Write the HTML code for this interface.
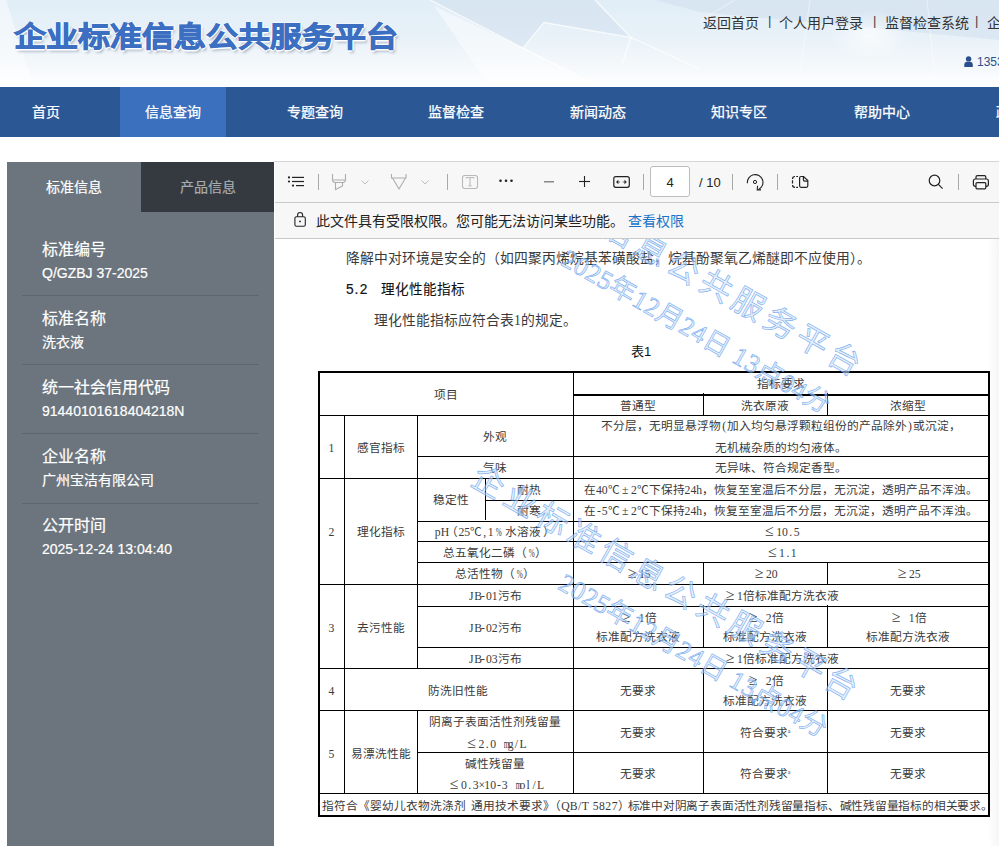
<!DOCTYPE html>
<html lang="zh-CN"><head><meta charset="utf-8"><title>企业标准信息公共服务平台</title>
<style>
html,body{margin:0;padding:0;}
body{width:999px;height:846px;overflow:hidden;position:relative;background:#fff;font-family:'Liberation Sans', sans-serif;}
.a{position:absolute;white-space:nowrap;}
.bx{position:absolute;}
.it{position:absolute;top:87px;height:50px;line-height:50px;color:#fff;font-size:14px;white-space:nowrap;-webkit-text-stroke:0.25px #fff;}
.tab{position:absolute;top:162px;height:50px;line-height:50px;text-align:center;font-size:14px;-webkit-text-stroke:0.2px currentColor;}
.blk{position:absolute;left:42px;color:#fff;white-space:nowrap;-webkit-text-stroke:0.2px #fff;}
.blk .t{font-size:16px;line-height:22px;}
.blk .v{font-size:14px;line-height:20px;margin-top:2px;}
.dvd{position:absolute;left:22px;width:237px;height:1px;background:#5e666d;}
.sep{position:absolute;width:1px;height:16px;background:#a9a9a9;top:174px;}
#doc{position:absolute;left:274px;top:239px;width:725px;height:607px;overflow:hidden;}
.dt{position:absolute;white-space:nowrap;font-family:'Liberation Serif', serif;color:#3a3a3a;}
.ln{position:absolute;background:#000;}
.fw{display:inline-block;width:1em;text-align:center;}
.hw{display:inline-block;width:0.5em;text-align:center;}
.fg{display:inline-block;width:0.87em;text-align:center;font-size:1.35em;line-height:1px;}
.wm{position:absolute;white-space:nowrap;transform-origin:0 0;font-family:'Liberation Serif', serif;}
</style></head><body>

<div class="bx" style="left:0;top:0;width:999px;height:87px;overflow:hidden;background:linear-gradient(180deg,#e1eef7 0%,#e8f1f8 40%,#f4f8fb 75%,#ffffff 100%);">
<svg width="999" height="87" style="position:absolute;left:0;top:0">
 <defs><radialGradient id="gl" cx="0.5" cy="0.5" r="0.5"><stop offset="0" stop-color="#ffffff" stop-opacity="0.7"/><stop offset="1" stop-color="#ffffff" stop-opacity="0"/></radialGradient></defs>
 <g fill="#cddcea" fill-opacity="0.45">
  <polygon points="430,0 595,0 631,37.5 544,22.5 523,48"/>
  <polygon points="655,0 999,0 999,40 700,12"/>
 </g>
 <g fill="#ffffff" fill-opacity="0.45">
  <polygon points="0,0 6,0 34,87 0,87"/>
  <polygon points="434,6 523,48 600,87 490,87"/>
 </g>
 <g fill="none" stroke="#ffffff" stroke-opacity="0.75" stroke-width="1.3">
  <path d="M430 0 L523 48 L544 22.5 L631 37.5 L595 0"/>
  <path d="M631 37.5 L622 64"/>
  <path d="M631 37.5 L700 69"/>
  <path d="M523 48 L600 87"/>
 </g>
 <g fill="none" stroke="#ffffff" stroke-opacity="0.45" stroke-width="1">
  <path d="M699 21 L735 0"/>
  <path d="M810 0 L798 87"/>
  <path d="M927 0 L936 87"/>
 </g>
 <ellipse cx="870" cy="35" rx="40" ry="25" fill="url(#gl)"/>
</svg>
<div class="a" style="left:14px;top:11.5px;font-size:32px;font-weight:900;color:#3c6fc2;-webkit-text-stroke:1px #3c6fc2;transform:scaleY(0.88);transform-origin:0 24px;text-shadow:1.5px 0 0 #fff,-1.5px 0 0 #fff,0 1.5px 0 #fff,0 -1.5px 0 #fff,1px 1px 0 #fff,-1px -1px 0 #fff,1px -1px 0 #fff,-1px 1px 0 #fff,2px 3px 3px rgba(60,80,110,0.4);">企业标准信息公共服务平台</div>
<div class="a" style="left:703px;top:11.5px;font-size:14px;color:#333;">返回首页</div>
<div class="a" style="left:768px;top:12.5px;font-size:13px;color:#444;">|</div>
<div class="a" style="left:779px;top:11.5px;font-size:14px;color:#333;">个人用户登录</div>
<div class="a" style="left:873px;top:12.5px;font-size:13px;color:#444;">|</div>
<div class="a" style="left:885px;top:11.5px;font-size:14px;color:#333;">监督检查系统</div>
<div class="a" style="left:975px;top:12.5px;font-size:13px;color:#444;">|</div>
<div class="a" style="left:987px;top:11.5px;font-size:14px;color:#333;">企业</div>
<svg class="a" style="left:964px;top:56px" width="9" height="11" viewBox="0 0 9 11"><circle cx="4.6" cy="2.9" r="2.7" fill="#2b4f8c"/><path d="M0.3 11 V8.4 Q0.3 6 2.8 5.8 H6.3 Q8.8 6 8.8 8.4 V11 Z" fill="#2b4f8c"/></svg>
<div class="a" style="left:977px;top:54.5px;font-size:12px;color:#2b4f8c;">13533</div>
</div>

<div class="bx" style="left:0;top:87px;width:999px;height:50px;background:#2c5795;"></div>
<div class="bx" style="left:120px;top:87px;width:106px;height:50px;background:#3a70bd;"></div>
<div class="it" style="left:31.6px">首页</div>
<div class="it" style="left:144.6px">信息查询</div>
<div class="it" style="left:286.7px">专题查询</div>
<div class="it" style="left:428.4px">监督检查</div>
<div class="it" style="left:570px">新闻动态</div>
<div class="it" style="left:711px">知识专区</div>
<div class="it" style="left:854px">帮助中心</div>
<div class="it" style="left:995.6px">政策法规</div>
<div class="bx" style="left:7px;top:162px;width:267px;height:684px;background:#6c757d;"></div>
<div class="tab" style="left:7px;width:134px;color:#fff;">标准信息</div>
<div class="tab" style="left:141px;width:133px;background:#343a40;color:#a9acaf;">产品信息</div>
<div class="blk" style="top:239.00px"><div class="t">标准编号</div><div class="v">Q/GZBJ 37-2025</div></div>
<div class="dvd" style="top:295.20px"></div>
<div class="blk" style="top:308.10px"><div class="t">标准名称</div><div class="v">洗衣液</div></div>
<div class="dvd" style="top:364.30px"></div>
<div class="blk" style="top:377.20px"><div class="t">统一社会信用代码</div><div class="v">91440101618404218N</div></div>
<div class="dvd" style="top:433.40px"></div>
<div class="blk" style="top:446.30px"><div class="t">企业名称</div><div class="v">广州宝洁有限公司</div></div>
<div class="dvd" style="top:502.50px"></div>
<div class="blk" style="top:515.40px"><div class="t">公开时间</div><div class="v">2025-12-24 13:04:40</div></div>
<div class="bx" style="left:274px;top:161px;width:725px;height:685px;background:#fff;"></div>
<div class="bx" style="left:274px;top:161px;width:725px;height:1px;background:#d6d6d6;"></div>
<div class="bx" style="left:275px;top:162px;width:724px;height:40px;background:#f7f7f7;"></div>
<div class="bx" style="left:275px;top:202px;width:724px;height:1px;background:#c9c9c9;"></div>
<div class="bx" style="left:275px;top:203px;width:724px;height:35px;background:#f7f7f7;"></div>
<div class="bx" style="left:275px;top:238px;width:724px;height:1px;background:#c9c9c9;"></div>
<div class="sep" style="left:318px"></div>
<div class="sep" style="left:447px"></div>
<div class="sep" style="left:643px"></div>
<div class="sep" style="left:732px"></div>
<div class="sep" style="left:777px"></div>
<div class="sep" style="left:958px"></div>
<div class="a" style="left:650px;top:166px;width:40px;height:31px;background:#fff;border:1px solid #bcbcbc;border-radius:3px;box-sizing:border-box;text-align:center;line-height:31px;font-size:13px;color:#222;">4</div>
<div class="a" style="left:699px;top:168px;line-height:30px;font-size:13px;color:#222;">/ 10</div>
<div class="a" style="left:316px;top:211px;font-size:14px;line-height:20px;color:#222;">此文件具有受限权限。您可能无法访问某些功能。</div>
<div class="a" style="left:628px;top:211px;font-size:14px;line-height:20px;color:#1a73c8;">查看权限</div>
<svg class="bx" style="left:0;top:0" width="999" height="240" viewBox="0 0 999 240"><g fill="#222"><circle cx="289" cy="177.4" r="1.1"/><circle cx="289" cy="181.5" r="1.1"/><circle cx="293" cy="185.6" r="1.1"/></g><g stroke="#222" stroke-width="1.2"><line x1="292" y1="177.4" x2="304" y2="177.4"/><line x1="292" y1="181.5" x2="304" y2="181.5"/><line x1="296" y1="185.6" x2="304" y2="185.6"/></g><g fill="none" stroke="#adadad" stroke-width="1.1"><path d="M332.5 174 V180 H345.5 V174"/><path d="M332.5 180 Q332.8 182.5 335 182.5 H343 Q345.2 182.5 345.5 180"/><path d="M335.5 182.5 V189.5 L342.5 186 V182.5"/></g><path d="M361.5 180.5 L365 184 L368.5 180.5" fill="none" stroke="#bdbdbd" stroke-width="1"/><g fill="none" stroke="#adadad" stroke-width="1.1"><path d="M391.5 174 V178 H406 V174"/><path d="M392.5 178 L399 189 L405.5 178"/></g><path d="M421.5 180.5 L425 184 L428.5 180.5" fill="none" stroke="#bdbdbd" stroke-width="1"/><rect x="462.5" y="175.5" width="15" height="13" rx="2.2" fill="none" stroke="#b9b9b9" stroke-width="1.1"/><g stroke="#b9b9b9" stroke-width="1" fill="none"><path d="M466 178.5 V177.6 H474 V178.5"/><path d="M470 177.6 V185.8 M468.3 185.8 H471.7"/></g><g fill="#222"><circle cx="500.5" cy="180.8" r="1.3"/><circle cx="506" cy="180.8" r="1.3"/><circle cx="511.5" cy="180.8" r="1.3"/></g><line x1="544" y1="181.8" x2="554" y2="181.8" stroke="#777" stroke-width="1.3"/><g stroke="#222" stroke-width="1.1"><line x1="579" y1="181.5" x2="590" y2="181.5"/><line x1="584.5" y1="176" x2="584.5" y2="187"/></g><rect x="613.8" y="176.7" width="15.5" height="10.6" rx="2" fill="none" stroke="#222" stroke-width="1.2"/><path d="M616 182 L618.4 179.8 V184.2 Z M626.8 182 L624.4 179.8 V184.2 Z" fill="#222"/><g stroke="#777" stroke-width="1"><line x1="618" y1="182" x2="620.2" y2="182"/><line x1="622.6" y1="182" x2="624.8" y2="182"/></g><g fill="none" stroke="#222" stroke-width="1.1"><path d="M747.4 183.2 A7.8 7.8 0 1 1 758.6 189.4"/><path d="M757.6 185.8 L757.2 189.9 L761 189.9"/></g><circle cx="755" cy="182" r="1.6" fill="none" stroke="#222" stroke-width="1"/><g fill="none" stroke="#222" stroke-width="1.2"><path d="M792.5 179 Q792.5 176.5 795 176.5 M796.2 176.5 H798 M792.5 180.3 V183.6 M792.5 185 Q792.5 187.3 795 187.3 M796.2 187.3 H798"/><path d="M803.6 176.5 H801 Q799.6 176.5 799.6 178 V185.8 Q799.6 187.3 801 187.3 H806.3 Q807.8 187.3 807.8 185.8 V180.6 Z"/><path d="M803.4 176.5 V179.8 Q803.4 181.2 804.8 181.2 H807.8"/></g><g fill="none" stroke="#222" stroke-width="1.2"><circle cx="934.5" cy="180.5" r="5.3"/><line x1="938.4" y1="184.4" x2="942.6" y2="188.6"/></g><g fill="none" stroke="#222" stroke-width="1.2"><path d="M976 179 V177 Q976 175.6 977.4 175.6 H984.4 Q985.8 175.6 985.8 177 V179"/><path d="M976 186.4 H975.5 Q973.4 186.4 973.4 184.3 V181 Q973.4 179 975.4 179 H986.4 Q988.4 179 988.4 181 V184.3 Q988.4 186.4 986.3 186.4 H985.8"/><rect x="976" y="182.6" width="9.8" height="6.2" rx="1"/></g><g fill="none" stroke="#222" stroke-width="1.1"><rect x="294.9" y="216.7" width="10.4" height="9.6" rx="1.6"/><path d="M297.6 216.7 V215 A2.5 2.5 0 0 1 302.6 215 V216.7"/></g><circle cx="300" cy="221.4" r="0.9" fill="#222"/></svg>
<div class="bx" style="left:990px;top:239px;width:9px;height:607px;background:linear-gradient(90deg,#fdfdfd,#f6f6f6);"></div>
<div id="doc">
<div class="dt" style="left:72.0px;top:11.0px;font-size:13.8px;line-height:17.9px;">降解中对环境是安全的（如四聚丙烯烷基苯磺酸盐，烷基酚聚氧乙烯醚即不应使用）。</div>
<div class="dt" style="left:72.0px;top:42.0px;font-size:13.76px;line-height:17.9px;font-family:'Liberation Sans',sans-serif;color:#111;-webkit-text-stroke:0.2px #111"><span class='hw'>5</span><span class='hw'>.</span><span class='hw'>2</span></div>
<div class="dt" style="left:107.0px;top:42.0px;font-size:13.6px;line-height:17.7px;font-family:'Liberation Sans',sans-serif;color:#111;-webkit-text-stroke:0.1px #111">理化性能指标</div>
<div class="dt" style="left:100.0px;top:73.0px;font-size:13.8px;line-height:17.9px;">理化性能指标应符合表1的规定。</div>
<div class="dt" style="left:357.0px;top:104.5px;font-size:13px;line-height:16.9px;font-family:'Liberation Sans',sans-serif;color:#111">表1</div>
<div class="ln" style="left:44.0px;top:132.0px;width:672.0px;height:2px"></div>
<div class="ln" style="left:44.0px;top:576.0px;width:672.0px;height:2px"></div>
<div class="ln" style="left:44.0px;top:132.0px;width:2px;height:446.0px"></div>
<div class="ln" style="left:714.0px;top:132.0px;width:2px;height:446.0px"></div>
<div class="ln" style="left:299.0px;top:154.5px;width:416.0px;height:2px"></div>
<div class="ln" style="left:45.0px;top:176.0px;width:670.0px;height:1px"></div>
<div class="ln" style="left:70.0px;top:176.0px;width:1px;height:378.0px"></div>
<div class="ln" style="left:143.0px;top:176.0px;width:1px;height:253.0px"></div>
<div class="ln" style="left:143.0px;top:471.0px;width:1px;height:83.0px"></div>
<div class="ln" style="left:299.0px;top:133.0px;width:1px;height:421.0px"></div>
<div class="ln" style="left:143.0px;top:217.0px;width:572.0px;height:1px"></div>
<div class="ln" style="left:45.0px;top:239.0px;width:670.0px;height:1px"></div>
<div class="ln" style="left:210.5px;top:239.0px;width:1px;height:42.0px"></div>
<div class="ln" style="left:210.5px;top:260.5px;width:504.5px;height:1px"></div>
<div class="ln" style="left:143.0px;top:281.5px;width:572.0px;height:1px"></div>
<div class="ln" style="left:143.0px;top:302.0px;width:572.0px;height:1px"></div>
<div class="ln" style="left:143.0px;top:323.0px;width:572.0px;height:1px"></div>
<div class="ln" style="left:45.0px;top:345.0px;width:670.0px;height:1px"></div>
<div class="ln" style="left:428.5px;top:154.0px;width:1px;height:22.0px"></div>
<div class="ln" style="left:553.0px;top:154.0px;width:1px;height:22.0px"></div>
<div class="ln" style="left:428.5px;top:323.0px;width:1px;height:22.0px"></div>
<div class="ln" style="left:553.0px;top:323.0px;width:1px;height:22.0px"></div>
<div class="ln" style="left:143.0px;top:366.5px;width:572.0px;height:1px"></div>
<div class="ln" style="left:143.0px;top:408.0px;width:572.0px;height:1px"></div>
<div class="ln" style="left:45.0px;top:429.0px;width:670.0px;height:1px"></div>
<div class="ln" style="left:45.0px;top:471.0px;width:670.0px;height:1px"></div>
<div class="ln" style="left:143.0px;top:513.0px;width:572.0px;height:1px"></div>
<div class="ln" style="left:45.0px;top:554.0px;width:670.0px;height:1px"></div>
<div class="ln" style="left:428.5px;top:366.0px;width:1px;height:42.0px"></div>
<div class="ln" style="left:553.0px;top:366.0px;width:1px;height:42.0px"></div>
<div class="ln" style="left:428.5px;top:429.0px;width:1px;height:125.0px"></div>
<div class="ln" style="left:553.0px;top:429.0px;width:1px;height:125.0px"></div>
<div class="dt" style="left:-78.0px;width:500px;text-align:center;top:146.5px;line-height:20px;font-size:11.7px;">项目</div>
<div class="dt" style="left:257.0px;width:500px;text-align:center;top:135.5px;line-height:20px;font-size:11.7px;">指标要求</div>
<div class="dt" style="left:114.0px;width:500px;text-align:center;top:157.5px;line-height:20px;font-size:11.7px;">普通型</div>
<div class="dt" style="left:241.0px;width:500px;text-align:center;top:157.5px;line-height:20px;font-size:11.7px;">洗衣原液</div>
<div class="dt" style="left:384.0px;width:500px;text-align:center;top:157.5px;line-height:20px;font-size:11.7px;">浓缩型</div>
<div class="dt" style="left:-192.5px;width:500px;text-align:center;top:199.5px;line-height:20px;font-size:11.7px;"><span class='hw'>1</span></div>
<div class="dt" style="left:-143.0px;width:500px;text-align:center;top:199.5px;line-height:20px;font-size:11.7px;">感官指标</div>
<div class="dt" style="left:-29.0px;width:500px;text-align:center;top:188.5px;line-height:20px;font-size:11.7px;">外观</div>
<div class="dt" style="left:-29.0px;width:500px;text-align:center;top:219.5px;line-height:20px;font-size:11.7px;">气味</div>
<div class="dt" style="left:257.0px;width:500px;text-align:center;top:177.5px;line-height:20px;font-size:11.7px;">不分层，无明显悬浮物<span class='hw'>(</span>加入均匀悬浮颗粒组份的产品除外<span class='hw'>)</span>或沉淀，</div>
<div class="dt" style="left:257.0px;width:500px;text-align:center;top:199.5px;line-height:20px;font-size:11.7px;">无机械杂质的均匀液体。</div>
<div class="dt" style="left:257.0px;width:500px;text-align:center;top:219.5px;line-height:20px;font-size:11.7px;">无异味、符合规定香型。</div>
<div class="dt" style="left:-192.5px;width:500px;text-align:center;top:283.5px;line-height:20px;font-size:11.7px;"><span class='hw'>2</span></div>
<div class="dt" style="left:-143.0px;width:500px;text-align:center;top:283.5px;line-height:20px;font-size:11.7px;">理化指标</div>
<div class="dt" style="left:-73.0px;width:500px;text-align:center;top:252.0px;line-height:20px;font-size:11.7px;">稳定性</div>
<div class="dt" style="left:5.0px;width:500px;text-align:center;top:241.5px;line-height:20px;font-size:11.7px;">耐热</div>
<div class="dt" style="left:5.0px;width:500px;text-align:center;top:262.5px;line-height:20px;font-size:11.7px;">耐寒</div>
<div class="dt" style="left:257.0px;width:500px;text-align:center;top:241.5px;line-height:20px;font-size:11.7px;">在<span class='hw'>4</span><span class='hw'>0</span><span class='fw'>℃</span><span class='fw'>±</span><span class='hw'>2</span><span class='fw'>℃</span>下保持<span class='hw'>2</span><span class='hw'>4</span><span class='hw'>h</span>，恢复至室温后不分层，无沉淀，透明产品不浑浊。</div>
<div class="dt" style="left:257.0px;width:500px;text-align:center;top:262.5px;line-height:20px;font-size:11.7px;">在<span class='hw'>-</span><span class='hw'>5</span><span class='fw'>℃</span><span class='fw'>±</span><span class='hw'>2</span><span class='fw'>℃</span>下保持<span class='hw'>2</span><span class='hw'>4</span><span class='hw'>h</span>，恢复至室温后不分层，无沉淀，透明产品不浑浊。</div>
<div class="dt" style="left:-29.0px;width:500px;text-align:center;top:283.5px;line-height:20px;font-size:11.7px;"><span class='hw'>p</span><span class='hw'>H</span>（<span class='hw'>2</span><span class='hw'>5</span><span class='fw'>℃</span><span class='hw'>,</span><span class='hw'>1</span><span class='hw'><span style='display:inline-block;transform:scaleX(0.62)'>%</span></span><span class='hw'>&nbsp;</span>水溶液<span style='padding-left:2px'>）</span></div>
<div class="dt" style="left:257.0px;width:500px;text-align:center;top:283.5px;line-height:20px;font-size:11.7px;"><span class='fg'>≤</span><span class='hw'>1</span><span class='hw'>0</span><span class='hw'>.</span><span class='hw'>5</span></div>
<div class="dt" style="left:-29.0px;width:500px;text-align:center;top:304.5px;line-height:20px;font-size:11.7px;">总五氧化二磷（<span class='hw'><span style='display:inline-block;transform:scaleX(0.62)'>%</span></span><span style='padding-left:2px'>）</span></div>
<div class="dt" style="left:257.0px;width:500px;text-align:center;top:304.5px;line-height:20px;font-size:11.7px;"><span class='fg'>≤</span><span class='hw'>1</span><span class='hw'>.</span><span class='hw'>1</span></div>
<div class="dt" style="left:-29.0px;width:500px;text-align:center;top:325.5px;line-height:20px;font-size:11.7px;">总活性物（<span class='hw'><span style='display:inline-block;transform:scaleX(0.62)'>%</span></span><span style='padding-left:2px'>）</span></div>
<div class="dt" style="left:114.0px;width:500px;text-align:center;top:325.5px;line-height:20px;font-size:11.7px;"><span class='fg'>≥</span><span class='hw'>1</span><span class='hw'>5</span></div>
<div class="dt" style="left:241.0px;width:500px;text-align:center;top:325.5px;line-height:20px;font-size:11.7px;"><span class='fg'>≥</span><span class='hw'>2</span><span class='hw'>0</span></div>
<div class="dt" style="left:384.0px;width:500px;text-align:center;top:325.5px;line-height:20px;font-size:11.7px;"><span class='fg'>≥</span><span class='hw'>2</span><span class='hw'>5</span></div>
<div class="dt" style="left:-192.5px;width:500px;text-align:center;top:379.5px;line-height:20px;font-size:11.7px;"><span class='hw'>3</span></div>
<div class="dt" style="left:-143.0px;width:500px;text-align:center;top:379.5px;line-height:20px;font-size:11.7px;">去污性能</div>
<div class="dt" style="left:-29.0px;width:500px;text-align:center;top:347.5px;line-height:20px;font-size:11.7px;"><span class='hw'>J</span><span class='hw'>B</span><span class='hw'>-</span><span class='hw'>0</span><span class='hw'>1</span>污布</div>
<div class="dt" style="left:-29.0px;width:500px;text-align:center;top:379.5px;line-height:20px;font-size:11.7px;"><span class='hw'>J</span><span class='hw'>B</span><span class='hw'>-</span><span class='hw'>0</span><span class='hw'>2</span>污布</div>
<div class="dt" style="left:-29.0px;width:500px;text-align:center;top:410.5px;line-height:20px;font-size:11.7px;"><span class='hw'>J</span><span class='hw'>B</span><span class='hw'>-</span><span class='hw'>0</span><span class='hw'>3</span>污布</div>
<div class="dt" style="left:257.0px;width:500px;text-align:center;top:347.5px;line-height:20px;font-size:11.7px;"><span class='fg'>≥</span><span class='hw'>1</span>倍标准配方洗衣液</div>
<div class="dt" style="left:114.0px;width:500px;text-align:center;top:369.5px;line-height:20px;font-size:11.7px;"><span class='fg'>≥</span><span class='hw'>&nbsp;</span><span class='hw'>1</span>倍</div>
<div class="dt" style="left:114.0px;width:500px;text-align:center;top:388.5px;line-height:20px;font-size:11.7px;">标准配方洗衣液</div>
<div class="dt" style="left:241.0px;width:500px;text-align:center;top:369.5px;line-height:20px;font-size:11.7px;"><span class='fg'>≥</span><span class='hw'>&nbsp;</span><span class='hw'>2</span>倍</div>
<div class="dt" style="left:241.0px;width:500px;text-align:center;top:388.5px;line-height:20px;font-size:11.7px;">标准配方洗衣液</div>
<div class="dt" style="left:384.0px;width:500px;text-align:center;top:369.5px;line-height:20px;font-size:11.7px;"><span class='fg'>≥</span><span class='hw'>&nbsp;</span><span class='hw'>1</span>倍</div>
<div class="dt" style="left:384.0px;width:500px;text-align:center;top:388.5px;line-height:20px;font-size:11.7px;">标准配方洗衣液</div>
<div class="dt" style="left:257.0px;width:500px;text-align:center;top:410.5px;line-height:20px;font-size:11.7px;"><span class='fg'>≥</span><span class='hw'>1</span>倍标准配方洗衣液</div>
<div class="dt" style="left:-192.5px;width:500px;text-align:center;top:442.5px;line-height:20px;font-size:11.7px;"><span class='hw'>4</span></div>
<div class="dt" style="left:-66.0px;width:500px;text-align:center;top:442.5px;line-height:20px;font-size:11.7px;">防洗旧性能</div>
<div class="dt" style="left:114.0px;width:500px;text-align:center;top:442.5px;line-height:20px;font-size:11.7px;">无要求</div>
<div class="dt" style="left:241.0px;width:500px;text-align:center;top:432.5px;line-height:20px;font-size:11.7px;"><span class='fg'>≥</span><span class='hw'>&nbsp;</span><span class='hw'>2</span>倍</div>
<div class="dt" style="left:241.0px;width:500px;text-align:center;top:452.5px;line-height:20px;font-size:11.7px;">标准配方洗衣液</div>
<div class="dt" style="left:384.0px;width:500px;text-align:center;top:442.5px;line-height:20px;font-size:11.7px;">无要求</div>
<div class="dt" style="left:-192.5px;width:500px;text-align:center;top:505.5px;line-height:20px;font-size:11.7px;"><span class='hw'>5</span></div>
<div class="dt" style="left:-143.0px;width:500px;text-align:center;top:505.5px;line-height:20px;font-size:11.7px;">易漂洗性能</div>
<div class="dt" style="left:-29.0px;width:500px;text-align:center;top:473.5px;line-height:20px;font-size:11.7px;">阴离子表面活性剂残留量</div>
<div class="dt" style="left:-29.0px;width:500px;text-align:center;top:495.5px;line-height:20px;font-size:11.7px;"><span class='fg'>≤</span><span class='hw'>2</span><span class='hw'>.</span><span class='hw'>0</span><span class='hw'>&nbsp;</span><span class='hw'><span style='display:inline-block;transform:scaleX(0.62)'>m</span></span><span class='hw'>g</span><span class='hw'>/</span><span class='hw'>L</span></div>
<div class="dt" style="left:-29.0px;width:500px;text-align:center;top:515.5px;line-height:20px;font-size:11.7px;">碱性残留量</div>
<div class="dt" style="left:-29.0px;width:500px;text-align:center;top:536.5px;line-height:20px;font-size:11.7px;"><span class='fg'>≤</span><span class='hw'>0</span><span class='hw'>.</span><span class='hw'>3</span><span class='hw'>×</span><span class='hw'>1</span><span class='hw'>0</span><span class='hw'>-</span><span class='hw'>3</span><span class='hw'>&nbsp;</span><span class='hw'><span style='display:inline-block;transform:scaleX(0.62)'>m</span></span><span class='hw'>o</span><span class='hw'>l</span><span class='hw'>/</span><span class='hw'>L</span></div>
<div class="dt" style="left:114.0px;width:500px;text-align:center;top:484.5px;line-height:20px;font-size:11.7px;">无要求</div>
<div class="dt" style="left:241.0px;width:500px;text-align:center;top:484.5px;line-height:20px;font-size:11.7px;">符合要求<span style='font-size:6px;position:relative;top:-4px'><span class='hw'>a</span></span></div>
<div class="dt" style="left:384.0px;width:500px;text-align:center;top:484.5px;line-height:20px;font-size:11.7px;">无要求</div>
<div class="dt" style="left:114.0px;width:500px;text-align:center;top:525.5px;line-height:20px;font-size:11.7px;">无要求</div>
<div class="dt" style="left:241.0px;width:500px;text-align:center;top:525.5px;line-height:20px;font-size:11.7px;">符合要求<span style='font-size:6px;position:relative;top:-4px'><span class='hw'>a</span></span></div>
<div class="dt" style="left:384.0px;width:500px;text-align:center;top:525.5px;line-height:20px;font-size:11.7px;">无要求</div>
<div class="dt" style="left:45px;width:669px;height:20px;overflow:hidden;top:557.5px;line-height:20px;font-size:11.7px;"><div style="position:absolute;left:2.9px;top:0"><sup style="font-size:6px;position:absolute;left:-5px;top:-4px">a</sup>指符合《婴幼儿衣物洗涤剂</div><div style="position:absolute;left:152.3px;top:0">通用技术要求》（Q<span style="letter-spacing:0.5px">B/T 5827</span>）</div><div style="position:absolute;left:308.5px;top:0;letter-spacing:-0.22px">标准中对阴离子表面活性剂残留量指标、碱性残留量指标的相关要求。</div></div>
<div class="wm" style="left:211.1px;top:-102.5px;font-size:32px;letter-spacing:4.95px;line-height:32px;transform:rotate(29.59deg);-webkit-text-stroke:0.7px rgba(95,155,235,0.75);color:rgba(205,225,250,0.55)">企业标准信息公共服务平台</div>
<div class="wm" style="left:296.4px;top:6.6px;font-size:26.2px;letter-spacing:0.6px;line-height:26.2px;transform:rotate(29.59deg);-webkit-text-stroke:0.7px rgba(95,155,235,0.75);color:rgba(205,225,250,0.55)">2025年12月24日 13点04分</div>
<div class="wm" style="left:207.6px;top:221.8px;font-size:32px;letter-spacing:4.95px;line-height:32px;transform:rotate(29.59deg);-webkit-text-stroke:0.7px rgba(95,155,235,0.75);color:rgba(205,225,250,0.55)">企业标准信息公共服务平台</div>
<div class="wm" style="left:292.9px;top:330.9px;font-size:26.2px;letter-spacing:0.6px;line-height:26.2px;transform:rotate(29.59deg);-webkit-text-stroke:0.7px rgba(95,155,235,0.75);color:rgba(205,225,250,0.55)">2025年12月24日 13点04分</div>
</div>
</body></html>
